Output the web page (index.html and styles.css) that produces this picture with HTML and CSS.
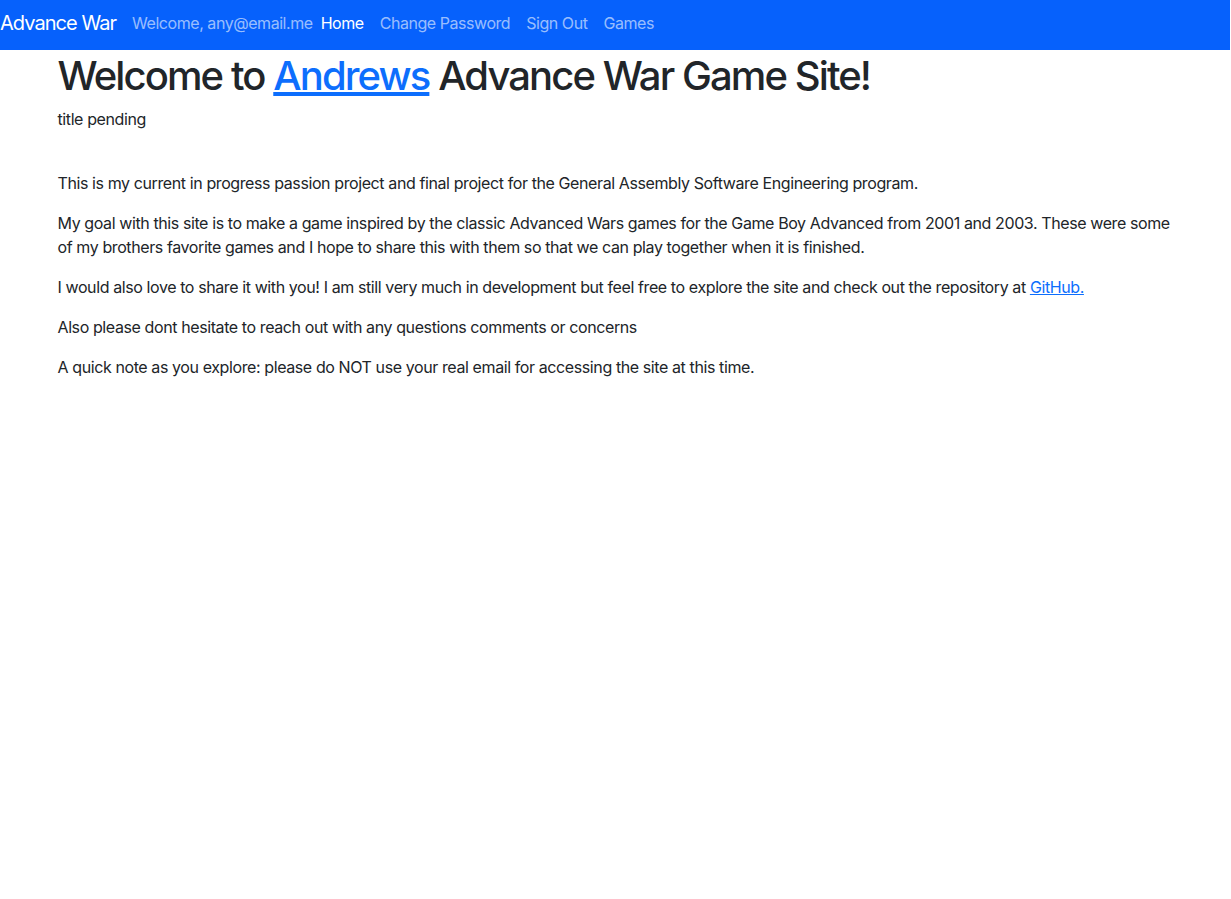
FILE: index.html
```html
<!DOCTYPE html>
<html lang="en">
<head>
<meta charset="utf-8">
<title>Advance War</title>
<link rel="stylesheet" href="styles.css">
</head>
<body>
<nav class="navbar">
  <a class="brand" href="#">Advance War</a>
  <span class="welcome">Welcome, any@email.me</span>
  <a class="nav-link active" href="#">Home</a>
  <a class="nav-link" href="#">Change Password</a>
  <a class="nav-link" href="#">Sign Out</a>
  <a class="nav-link" href="#">Games</a>
</nav>
<main class="container">
  <h1 class="title">Welcome to <a href="#">Andrews</a> Advance War Game Site!</h1>
  <p class="subtitle">title pending</p>
  <div class="content">
    <p>This is my current in progress passion project and final project for the General Assembly Software Engineering program.</p>
    <p>My goal with this site is to make a game inspired by the classic Advanced Wars games for the Game Boy Advanced from 2001 and 2003. These were some of my brothers favorite games and I hope to share this with them so that we can play together when it is finished.</p>
    <p>I would also love to share it with you! I am still very much in development but feel free to explore the site and check out the repository at <a href="#">GitHub.</a></p>
    <p>Also please dont hesitate to reach out with any questions comments or concerns</p>
    <p>A quick note as you explore: please do NOT use your real email for accessing the site at this time.</p>
  </div>
</main>
</body>
</html>
```
FILE: styles.css
```css
* { box-sizing: border-box; }
html, body { margin: 0; padding: 0; }
body {
  font-family: Inter, "Noto Sans", "Liberation Sans", sans-serif;
  font-size: 16px;
  line-height: 1.5;
  color: #212529;
  background: #fff;
  letter-spacing: -0.4px;
}
a { color: #0d6efd; }
.navbar {
  display: flex;
  align-items: center;
  height: 50px;
  padding-bottom: 4px;
  background: #0661fc;
  margin-right: 1px;
  letter-spacing: -0.45px;
}
.brand {
  color: #fff;
  text-decoration: none;
  font-size: 20px;
  line-height: 30px;
  margin-right: 16px;
  letter-spacing: -0.95px;
}
.welcome {
  color: rgba(255, 255, 255, 0.6);
}
.nav-link {
  color: rgba(255, 255, 255, 0.6);
  text-decoration: none;
  padding: 0 8px;
}
.nav-link.active { color: #fff; }
.container {
  max-width: 1140px;
  margin: 0 auto;
  padding: 0 12px;
}
.title {
  margin: 2px 0 7px;
  font-size: 40px;
  font-weight: 500;
  line-height: 1.2;
  letter-spacing: -1.9px;
}
.subtitle { margin: 0 0 40px; }
.content p { margin: 0 0 16px; }
```
